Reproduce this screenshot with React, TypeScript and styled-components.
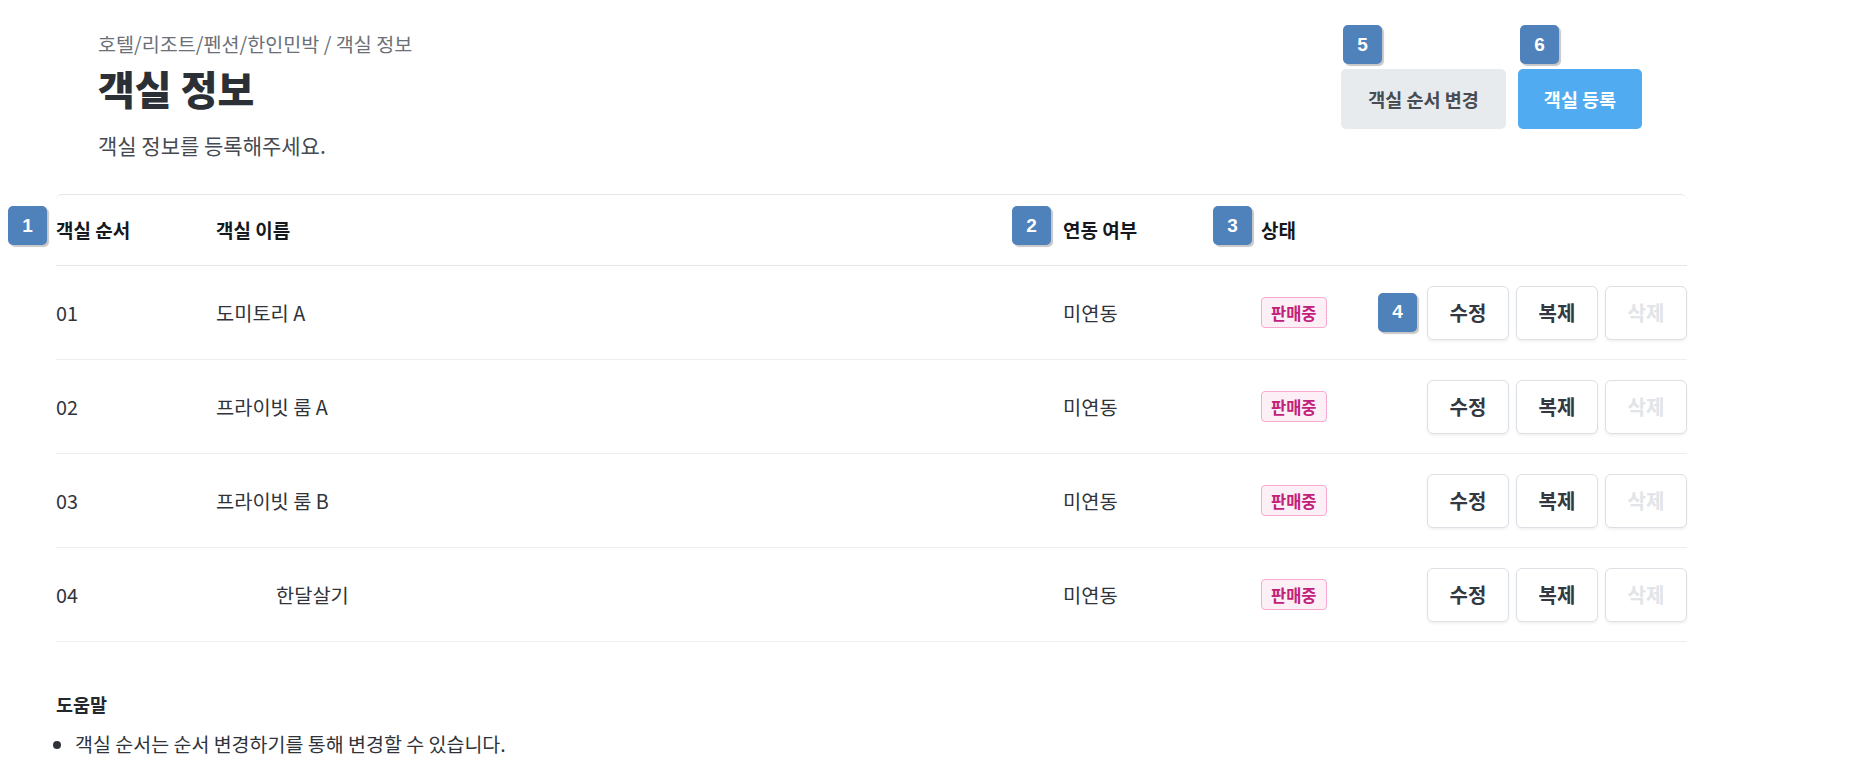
import React from 'react';
import styled, {createGlobalStyle} from "styled-components";

const GlobalStyle = createGlobalStyle`
    html, body {
        margin: 0;
        padding: 0;
        background: #ffffff;
    }
    body {
        font-family: "Noto Sans CJK KR", "Noto Sans", sans-serif;
        color: #333;
    }
`

type Room = {
    order: string;
    name: string;
    indent?: number;
}

const rooms: Room[] = [
    {order: '01', name: '도미토리 A'},
    {order: '02', name: '프라이빗 룸 A'},
    {order: '03', name: '프라이빗 룸 B'},
    {order: '04', name: '한달살기', indent: 60},
];

export default function App() {
    return (
        <>
            <GlobalStyle/>
            <Page>
                <Header>
                    <HeaderText>
                        <Breadcrumb>호텔/리조트/펜션/한인민박 / 객실 정보</Breadcrumb>
                        <Title>객실 정보</Title>
                        <Subtitle>객실 정보를 등록해주세요.</Subtitle>
                    </HeaderText>

                    <HeaderActions>
                        <Marked>
                            <Marker $top={-44} $left={2}>5</Marker>
                            <TopButton $variant="gray">객실 순서 변경</TopButton>
                        </Marked>
                        <Marked>
                            <Marker $top={-44} $left={2}>6</Marker>
                            <TopButton $variant="blue">객실 등록</TopButton>
                        </Marked>
                    </HeaderActions>
                </Header>

                <Table>
                    <HeadRow>
                        <HeadCell>
                            <Marker $top={-10} $left={-48}>1</Marker>
                            객실 순서
                        </HeadCell>
                        <HeadCell>객실 이름</HeadCell>
                        <HeadCell>
                            <Marker $top={-10} $left={-51}>2</Marker>
                            연동 여부
                        </HeadCell>
                        <HeadCell>
                            <Marker $top={-10} $left={-48}>3</Marker>
                            상태
                        </HeadCell>
                        <HeadCell/>
                    </HeadRow>

                    {rooms.map((room, i) => (
                        <Row key={room.order}>
                            <Cell>{room.order}</Cell>
                            <Cell $indent={room.indent}>{room.name}</Cell>
                            <Cell>미연동</Cell>
                            <Cell>
                                <Status>판매중</Status>
                            </Cell>
                            <Actions>
                                {i === 0 && <Marker $top={7} $left={-49}>4</Marker>}
                                <RowButton>수정</RowButton>
                                <RowButton>복제</RowButton>
                                <RowButton disabled>삭제</RowButton>
                            </Actions>
                        </Row>
                    ))}
                </Table>

                <Help>
                    <HelpTitle>도움말</HelpTitle>
                    <HelpList>
                        <li>객실 순서는 순서 변경하기를 통해 변경할 수 있습니다.</li>
                    </HelpList>
                </Help>
            </Page>
        </>
    );
}

const Page = styled.main`
    width: 1631px;
    padding-left: 56px;
`
const Header = styled.header`
    display: flex;
    justify-content: space-between;
    align-items: flex-start;
    padding: 31px 45px 0 42px;
    height: 163px;
`
const HeaderText = styled.div`
    display: flex;
    flex-direction: column;
`
const Breadcrumb = styled.div`
    font-size: 19.6px;
    line-height: 26px;
    color: #6b7078;
`
const Title = styled.h1`
    margin: 7px 0 0;
    font-size: 40px;
    font-weight: 800;
    line-height: 48px;
    color: #2b2f36;
`
const Subtitle = styled.p`
    margin: 19px 0 0;
    font-size: 21px;
    line-height: 28px;
    color: #454a52;
`
const HeaderActions = styled.div`
    display: flex;
    gap: 12px;
    padding-top: 38px;
`
const Marked = styled.div`
    position: relative;
`
const Marker = styled.span<{ $top: number; $left: number }>`
    position: absolute;
    top: ${p => p.$top}px;
    left: ${p => p.$left}px;
    width: 39px;
    height: 39px;
    display: flex;
    align-items: center;
    justify-content: center;
    border-radius: 5px;
    background: #4f81bb;
    color: #ffffff;
    font-family: "Liberation Sans", Arial, sans-serif;
    font-size: 19px;
    font-weight: 700;
    box-shadow: 2px 2px 1px rgba(0, 0, 0, 0.22);
`
const TopButton = styled.button<{ $variant: 'gray' | 'blue' }>`
    height: 60px;
    padding: 0 25px;
    border: none;
    border-radius: 5px;
    font-family: "Noto Sans CJK KR", "Noto Sans", sans-serif;
    font-size: 18.5px;
    font-weight: 700;
    background: ${p => p.$variant === 'blue' ? '#51abf1' : '#e8ebee'};
    color: ${p => p.$variant === 'blue' ? '#ffffff' : '#474c54'};
    min-width: ${p => p.$variant === 'blue' ? 124 : 165}px;
`
const Table = styled.section`
    border-top: 1px solid #e3e5e9;
    border-radius: 6px 6px 0 0;
`
const columns = `160px 847px 198px 1fr auto`

const HeadRow = styled.div`
    display: grid;
    grid-template-columns: ${columns};
    align-items: center;
    height: 70px;
    border-bottom: 1px solid #e3e5e9;
`
const HeadCell = styled.div`
    position: relative;
    font-size: 19px;
    line-height: 28px;
    font-weight: 700;
    color: #15181c;
`
const Row = styled.div`
    display: grid;
    grid-template-columns: ${columns};
    align-items: center;
    height: 93px;
    border-bottom: 1px solid #eceef1;
`
const Cell = styled.div<{ $indent?: number }>`
    font-size: 19.8px;
    line-height: 28px;
    color: #30343a;
    padding-left: ${p => p.$indent ?? 0}px;
`
const Status = styled.span`
    display: inline-flex;
    align-items: center;
    height: 29px;
    padding: 0 9px;
    border: 1px solid #f7a9cf;
    border-radius: 4px;
    background: #fdeff6;
    color: #c2217b;
    font-size: 16.5px;
    font-weight: 700;
`
const Actions = styled.div`
    position: relative;
    display: flex;
    gap: 7px;
`
const RowButton = styled.button`
    width: 82px;
    height: 54px;
    border: 1px solid #dcdfe4;
    border-radius: 6px;
    background: #ffffff;
    box-shadow: 0 2px 3px rgba(0, 0, 0, 0.05);
    font-family: "Noto Sans CJK KR", "Noto Sans", sans-serif;
    font-size: 20px;
    font-weight: 600;
    color: #343840;

    &:disabled {
        color: #e1e4e8;
    }
`
const Help = styled.section`
    padding-top: 49px;
`
const HelpTitle = styled.h3`
    margin: 0;
    font-size: 18.5px;
    font-weight: 700;
    line-height: 26px;
    color: #24272c;
`
const HelpList = styled.ul`
    margin: 14px 0 0;
    padding-left: 19px;
    font-size: 19.5px;
    line-height: 26px;
    color: #30343a;
`
